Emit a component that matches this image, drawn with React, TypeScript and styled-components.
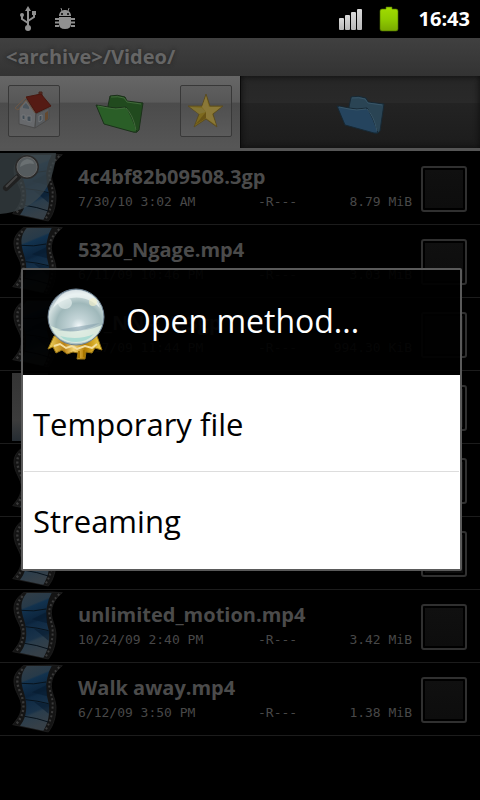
import React, { useState } from "react";
import styled, { createGlobalStyle } from "styled-components";

const GlobalStyle = createGlobalStyle`
  * { box-sizing: border-box; }
  body {
    margin: 0;
    background: #000;
    font-family: "Open Sans", "Noto Sans", sans-serif;
  }
  button { font: inherit; border: 0; padding: 0; margin: 0; cursor: pointer; }
`;

const Screen = styled.div`
  min-height: 100vh;
  display: flex;
  flex-direction: column;
  background: #000;
`;

const StatusBar = styled.header`
  height: 38px;
  padding: 0 10px 0 20px;
  display: flex;
  align-items: center;
  color: #fff;
`;

const StatusGroup = styled.div<{ $end?: boolean }>`
  display: flex;
  align-items: center;
  gap: ${(p) => (p.$end ? 16 : 18)}px;
  margin-left: ${(p) => (p.$end ? "auto" : 0)};
`;

const Clock = styled.time`
  margin-left: 4px;
  font-size: 20px;
  font-weight: 700;
  line-height: 38px;
`;

const Browser = styled.main`
  position: relative;
  flex: 1;
  display: flex;
  flex-direction: column;
`;

const PathBar = styled.h1`
  margin: 0;
  height: 38px;
  padding: 0 6px;
  font-size: 20px;
  font-weight: 700;
  line-height: 38px;
  color: #666;
  background: linear-gradient(#404040, #333);
  text-shadow: 0 0 4px #222;
`;

const Toolbar = styled.nav`
  height: 75px;
  display: grid;
  grid-template-columns: 1fr 1fr;
  border-bottom: 3px solid #555;
  margin-bottom: 1px;
`;

const ActivePane = styled.div`
  display: flex;
  align-items: center;
  justify-content: space-between;
  padding: 0 8px 2px;
  background: linear-gradient(#666, #5b5b5b 36%, #4b4b4b 38%, #565656);
`;

const InactivePane = styled.div`
  display: flex;
  align-items: center;
  justify-content: center;
  border-left: 1px solid #0a0a0a;
  background: linear-gradient(#262626, #292929 37%, #232323 38%, #1c1c1c);
  box-shadow: inset 0 0 6px #0c0c0c;
`;

const ToolButton = styled.button<{ $framed?: boolean }>`
  width: 52px;
  height: 52px;
  padding-top: ${(p) => (p.$framed ? 0 : 6)}px;
  display: flex;
  align-items: center;
  justify-content: center;
  border: 1px solid ${(p) => (p.$framed ? "#383838" : "transparent")};
  border-radius: 2px;
  background: ${(p) =>
    p.$framed ? "linear-gradient(#5e5e5e, #575757 33%, #4f4f4f 36%, #5b5b5b)" : "none"};
`;

const FileList = styled.ul`
  list-style: none;
  margin: 0;
  padding: 0;
`;

const FileRow = styled.li`
  height: 73px;
  display: flex;
  align-items: center;
  padding-right: 13px;
  border-bottom: 1px solid #1c1c1c;
`;

const Thumb = styled.div`
  position: relative;
  width: 78px;
  height: 72px;
  flex: none;
  padding-left: 12px;
`;

const SearchBadge = styled.button`
  position: absolute;
  left: 0;
  top: 0;
  background: none;
  display: block;
`;

const FileText = styled.div`
  flex: 1;
  min-width: 0;
  height: 66px;
  padding-top: 7px;
`;

const FileName = styled.div`
  height: 30px;
  line-height: 30px;
  font-size: 20px;
  font-weight: 700;
  color: #4b4b4b;
  white-space: nowrap;
`;

const FileMeta = styled.div`
  display: grid;
  grid-template-columns: 180px 1fr auto;
  font-family: "DejaVu Sans Mono", monospace;
  font-size: 13px;
  line-height: 20px;
  color: #484848;
  white-space: nowrap;
`;

const SelectBox = styled.input`
  appearance: none;
  flex: none;
  width: 46px;
  height: 46px;
  margin: 2px 0 0 9px;
  border: 2px solid #303030;
  border-radius: 3px;
  background: linear-gradient(#101010, #0d0d0d) content-box;
  padding: 2px;
`;

const Overlay = styled.div`
  position: absolute;
  inset: 0;
  display: flex;
  align-items: center;
  padding: 1px 18px 0 21px;
`;

const Dialog = styled.section`
  flex: 1;
  border: 2px solid #5a5a5a;
  border-radius: 2px;
`;

const DialogHeader = styled.div`
  height: 105px;
  padding: 0 20px;
  display: flex;
  align-items: center;
  gap: 19px;
  background: rgba(0, 0, 0, 0.92);
`;

const DialogTitle = styled.h2`
  margin: 0;
  padding-bottom: 4px;
  font-size: 32px;
  font-weight: 400;
  line-height: 44px;
  color: #fff;
`;

const Choices = styled.div`
  background: #fff;
  padding: 0 1px;
`;

const Choice = styled.button`
  display: block;
  width: 100%;
  height: 97px;
  padding: 2px 9px 0;
  background: #fff;
  color: #000;
  text-align: left;
  font-size: 31px;
  line-height: 44px;
  border-bottom: 1px solid #ddd;
  &:last-child { border-bottom-color: #fff; }
`;

const UsbIcon = () => (
  <svg width="16" height="26" viewBox="0 0 16 26" fill="none" stroke="#909090" strokeWidth="2" aria-hidden="true">
    <path d="M8 3V22M8 17 L2 13V9M8 15L14 11V7" />
    <path d="M8 0L11 5H5Z" fill="#909090" stroke="none" />
    <circle cx="8" cy="22" r="3" fill="#909090" stroke="none" />
    <circle cx="2" cy="9" r="2" fill="#909090" stroke="none" />
    <path d="M12 5h4v4h-4z" fill="#909090" stroke="none" />
  </svg>
);

const BugIcon = () => (
  <svg width="22" height="22" viewBox="0 0 22 22" fill="#909090" aria-hidden="true">
    <path d="M5 8C5 4 8 2 11 2S17 4 17 8Z" />
    <path d="M5 9H17V16Q17 21 11 21Q5 21 5 16Z" />
    <path d="M7 0L8 3M15 0L14 3" stroke="#909090" />
    <path d="M5 11H1M5 14.5H1M5 18H1M17 11H21M17 14.5H21M17 18H21" stroke="#909090" strokeWidth="2" fill="none" />
    <circle cx="8" cy="6" r="1" fill="#000" />
    <circle cx="14" cy="6" r="1" fill="#000" />
  </svg>
);

const SignalIcon = () => (
  <svg width="25" height="24" viewBox="0 0 25 24" aria-hidden="true">
    <defs>
      <linearGradient id="signal" x1="0" y1="0" x2="0" y2="1">
        <stop stopColor="#dadada" />
        <stop offset="1" stopColor="#b8b8b8" />
      </linearGradient>
    </defs>
    <g fill="url(#signal)">
      <rect x="1" y="11" width="5" height="12" rx="1" />
      <rect x="7" y="8" width="5" height="15" rx="1" />
      <rect x="13" y="5" width="5" height="18" rx="1" />
      <rect x="19" y="2" width="5" height="21" rx="1" />
    </g>
  </svg>
);

const BatteryIcon = () => (
  <svg width="20" height="28" viewBox="0 0 20 28" aria-hidden="true">
    <defs>
      <linearGradient id="battery" x1="0" y1="0" x2="0" y2="1">
        <stop stopColor="#a2dc00" />
        <stop offset="0.5" stopColor="#90cc00" />
        <stop offset="1" stopColor="#78a800" />
      </linearGradient>
    </defs>
    <path d="M7 2H13V4H17Q19 4 19 6V24Q19 26 17 26H3Q1 26 1 24V6Q1 4 3 4H7Z" fill="url(#battery)" stroke="#4d7000" strokeOpacity="0.6" />
  </svg>
);

const HouseIcon = () => (
  <svg width="40" height="40" viewBox="0 0 40 40" aria-hidden="true">
    <path d="M5 17L12 8L22 23L21 37L5 33Z" fill="#67696c" stroke="#4a4a4a" />
    <path d="M22 23L35 17V28L21 37Z" fill="#585b5e" stroke="#4a4a4a" />
    <path d="M25 6V1H28V8" fill="#5c2a1e" stroke="#42221b" />
    <path d="M12 6L27 3L37 15L22 22Z" fill="#551b14" stroke="#48170f" />
    <path d="M12 6L1 17L4 19L12 9L21 22" fill="none" stroke="#6b5645" strokeWidth="1" />
    <path d="M8 24h3v5l-3-1zM13 25h4v6l-4-1zM25 25l3-1v5l-3 2z" fill="#414c55" stroke="#747779" />
    <path d="M31 22L34 20V28L31 30Z" fill="#64492f" />
    <path d="M9 15L12 12L15 16V18L9 17Z" fill="#4b555d" />
  </svg>
);

const StarIcon = () => (
  <svg width="38" height="38" viewBox="0 0 38 38" aria-hidden="true">
    <path d="M19 2L23 14L36 14L26 22L30 35L19 27L7 35L12 22L1 14L15 14Z" fill="#7d6a1e" stroke="#5a4c24" />
    <path d="M19 4L22 15L19 20L15 15ZM34 15L25 22L19 20L22 15ZM29 33L19 26V20L25 22Z" fill="#8a7838" />
    <path d="M19 20L12 22L3 15L15 16Z" fill="#817334" />
    <path d="M19 20L8 33L19 26Z" fill="#695416" />
  </svg>
);

const folderTones = {
  green: { back: "#214a1e", front: "#2a5e27", edge: "#1b311a", shine: "#426b3b" },
  blue: { back: "#2a4454", front: "#25445e", edge: "#172833", shine: "#385567" },
};

const FolderIcon = ({ tone }: { tone: keyof typeof folderTones }) => {
  const c = folderTones[tone];
  return (
    <svg width="50" height="42" viewBox="0 0 50 42" aria-hidden="true">
      <path d="M13 13L15 3Q22 1 30 4L32 8L48 10L44 37Q42 40 39 39L15 31Z" fill={c.back} stroke={c.edge} strokeLinejoin="round" />
      <path d="M1 12L13 14Q20 16 31 14Q37 23 42 39L38 39L9 31Z" fill={c.front} stroke={c.edge} strokeLinejoin="round" />
      <path d="M3 13L13 15Q20 17 30 15M16 4Q23 3 29 5L32 9L46 11" fill="none" stroke={c.shine} />
      <path d="M31 15Q38 22 41 37" fill="none" stroke={c.shine} />
    </svg>
  );
};

const FilmIcon = () => (
  <svg width="52" height="72" viewBox="0 0 156 216" aria-hidden="true">
    <defs>
      <linearGradient id="film" x1="0" y1="0" x2="0.2" y2="1">
        <stop stopColor="#333e46" />
        <stop offset="0.24" stopColor="#273a49" />
        <stop offset="0.27" stopColor="#12324e" />
        <stop offset="0.5" stopColor="#0b233b" />
        <stop offset="0.54" stopColor="#0f2a44" />
        <stop offset="0.76" stopColor="#193249" />
        <stop offset="0.8" stopColor="#2a3d4c" />
        <stop offset="1" stopColor="#364048" />
      </linearGradient>
    </defs>
    <path d="M34 8C8 28 2 46 8 70C12 92 28 105 28 130C28 155 14 170 2 185L109 207C126 185 132 160 132 130C130 105 118 90 118 70C118 45 130 25 151 8L120 6Z" fill="#141414" stroke="#242424" strokeWidth="2" />
    <path d="M44 9C22 36 28 58 33 80C42 106 46 130 40 155C36 172 30 180 24 188L94 203C110 178 114 150 110 120C104 94 98 76 106 45Q110 24 119 9Z" fill="url(#film)" />
    <path d="M66 116L110 152L112 124ZM60 88L104 66L106 100Z" fill="#061a2e" opacity="0.6" />
    <path d="M28 61Q65 66 102 57M41 110Q75 113 110 122M38 160Q75 165 109 177" fill="none" stroke="#07121b" strokeWidth="3" />
    <path d="M32 18C12 40 14 54 20 76C28 98 36 110 34 138Q30 164 12 184" fill="none" stroke="#3a3a3a" strokeWidth="7" strokeDasharray="6 7" />
    <path d="M142 12C118 36 110 52 112 76C120 106 124 112 121 142Q118 172 100 202" fill="none" stroke="#3a3a3a" strokeWidth="6" strokeDasharray="6 7" />
  </svg>
);

const DocumentIcon = () => (
  <svg width="52" height="72" viewBox="0 0 52 72" aria-hidden="true">
    <defs>
      <linearGradient id="paper" x1="0" y1="0" x2="0" y2="1">
        <stop stopColor="#343434" />
        <stop offset="0.7" stopColor="#3c3c3c" />
        <stop offset="1" stopColor="#252c32" />
      </linearGradient>
    </defs>
    <path d="M0 2H36V70H0Z" fill="url(#paper)" />
  </svg>
);

const MagnifierIcon = () => (
  <svg width="60" height="66" viewBox="0 0 60 66" aria-hidden="true">
    <path d="M0 1H56C54 36 36 59 0 62Z" fill="#3f484d" opacity="0.7" />
    <path d="M18 25L6 36" stroke="#202020" strokeWidth="6" strokeLinecap="round" />
    <path d="M17 24L6 35" stroke="#444" strokeWidth="2" />
    <circle cx="27" cy="15" r="11" fill="#555b5e" stroke="#2b2b2b" strokeWidth="2" />
    <circle cx="27" cy="15" r="10" fill="none" stroke="#666" />
    <path d="M20 15Q20 9 27 7Q34 8 34 12Q27 10 20 15Z" fill="#6a7072" />
  </svg>
);

const CrystalBallIcon = () => (
  <svg width="64" height="74" viewBox="0 0 64 74" aria-hidden="true">
    <defs>
      <radialGradient id="ball" cx="0.55" cy="0.66" r="0.68">
        <stop stopColor="#f2f8fa" />
        <stop offset="0.2" stopColor="#c4d5d8" />
        <stop offset="0.6" stopColor="#9fb8ba" />
        <stop offset="0.84" stopColor="#d3e0e0" />
        <stop offset="1" stopColor="#8599aa" />
      </radialGradient>
      <linearGradient id="gold" x1="0" y1="0" x2="1" y2="0">
        <stop stopColor="#efd45e" />
        <stop offset="0.3" stopColor="#ba8115" />
        <stop offset="0.48" stopColor="#f5d574" />
        <stop offset="0.68" stopColor="#b57c00" />
        <stop offset="1" stopColor="#f2d650" />
      </linearGradient>
    </defs>
    <path d="M11 50L5 63L10 61L13 67L19 64L24 68L30 66L35 67L34 73H42L43 66L49 67L52 62L59 64L54 50Z" fill="url(#gold)" stroke="#977313" />
    <path d="M11 60L17 58L23 62L29 60L34 63L42 60L49 62L54 58" fill="none" stroke="#f4dfa0" strokeWidth="2" />
    <path d="M36 65V72M41 64V71" stroke="#a87600" strokeWidth="2" />
    <circle cx="33" cy="31" r="28" fill="url(#ball)" stroke="#6c7f90" strokeWidth="1" />
    <path d="M10 22C14 10 23 4 33 4C44 4 53 10 57 22C44 8 23 8 10 22Z" fill="#f4faf9" opacity="0.7" />
    <path d="M8 40Q31 51 59 39Q53 57 33 57Q14 57 8 40Z" fill="#e3f1e4" opacity="0.8" />
    <path d="M14 44Q37 49 57 37Q39 40 14 44Z" fill="#839fab" opacity="0.55" />
    <path d="M17 50Q35 55 51 48Q44 56 33 56Q23 56 17 50Z" fill="#acdcd3" />
    <ellipse cx="22" cy="17" rx="7" ry="6" fill="#edf5f4" opacity="0.6" />
    <circle cx="50" cy="16" r="4" fill="#f2efcb" opacity="0.65" />
  </svg>
);

type Entry = { name: string; date: string; size: string; kind?: "document"; search?: boolean };

const entries: Entry[] = [
  { name: "4c4bf82b09508.3gp", date: "7/30/10 3:02 AM", size: "8.79 MiB", search: true },
  { name: "5320_Ngage.mp4", date: "6/11/09 10:46 PM", size: "3.03 MiB" },
  { name: "LG_NNA_A.3gp", date: "6/17/09 11:44 PM", size: "994.30 KiB" },
  { name: "", date: "", size: "", kind: "document" },
  { name: "", date: "", size: "" },
  { name: "", date: "", size: "" },
  { name: "unlimited_motion.mp4", date: "10/24/09 2:40 PM", size: "3.42 MiB" },
  { name: "Walk away.mp4", date: "6/12/09 3:50 PM", size: "1.38 MiB" },
];

export default function App() {
  const [open, setOpen] = useState(true);
  return (
    <Screen>
      <GlobalStyle />
      <StatusBar>
        <StatusGroup>
          <UsbIcon />
          <BugIcon />
        </StatusGroup>
        <StatusGroup $end>
          <SignalIcon />
          <BatteryIcon />
          <Clock>16:43</Clock>
        </StatusGroup>
      </StatusBar>
      <Browser>
        <PathBar>&lt;archive&gt;/Video/</PathBar>
        <Toolbar aria-label="Panes">
          <ActivePane>
            <ToolButton $framed aria-label="Home"><HouseIcon /></ToolButton>
            <ToolButton aria-label="Left pane"><FolderIcon tone="green" /></ToolButton>
            <ToolButton $framed aria-label="Favorites"><StarIcon /></ToolButton>
          </ActivePane>
          <InactivePane>
            <ToolButton aria-label="Right pane"><FolderIcon tone="blue" /></ToolButton>
          </InactivePane>
        </Toolbar>
        <FileList>
          {entries.map((entry, i) => (
            <FileRow key={i}>
              <Thumb>
                {entry.kind === "document" ? <DocumentIcon /> : <FilmIcon />}
                {entry.search && <SearchBadge aria-label="Search"><MagnifierIcon /></SearchBadge>}
              </Thumb>
              <FileText>
                <FileName>{entry.name}</FileName>
                {entry.date && (
                  <FileMeta>
                    <span>{entry.date}</span>
                    <span>-R---</span>
                    <span>{entry.size}</span>
                  </FileMeta>
                )}
              </FileText>
              <SelectBox type="checkbox" aria-label={`Select ${entry.name || "file"}`} />
            </FileRow>
          ))}
        </FileList>
        {open && (
          <Overlay>
            <Dialog role="dialog" aria-labelledby="dialog-title">
              <DialogHeader>
                <CrystalBallIcon />
                <DialogTitle id="dialog-title">Open method...</DialogTitle>
              </DialogHeader>
              <Choices>
                <Choice onClick={() => setOpen(false)}>Temporary file</Choice>
                <Choice onClick={() => setOpen(false)}>Streaming</Choice>
              </Choices>
            </Dialog>
          </Overlay>
        )}
      </Browser>
    </Screen>
  );
}
